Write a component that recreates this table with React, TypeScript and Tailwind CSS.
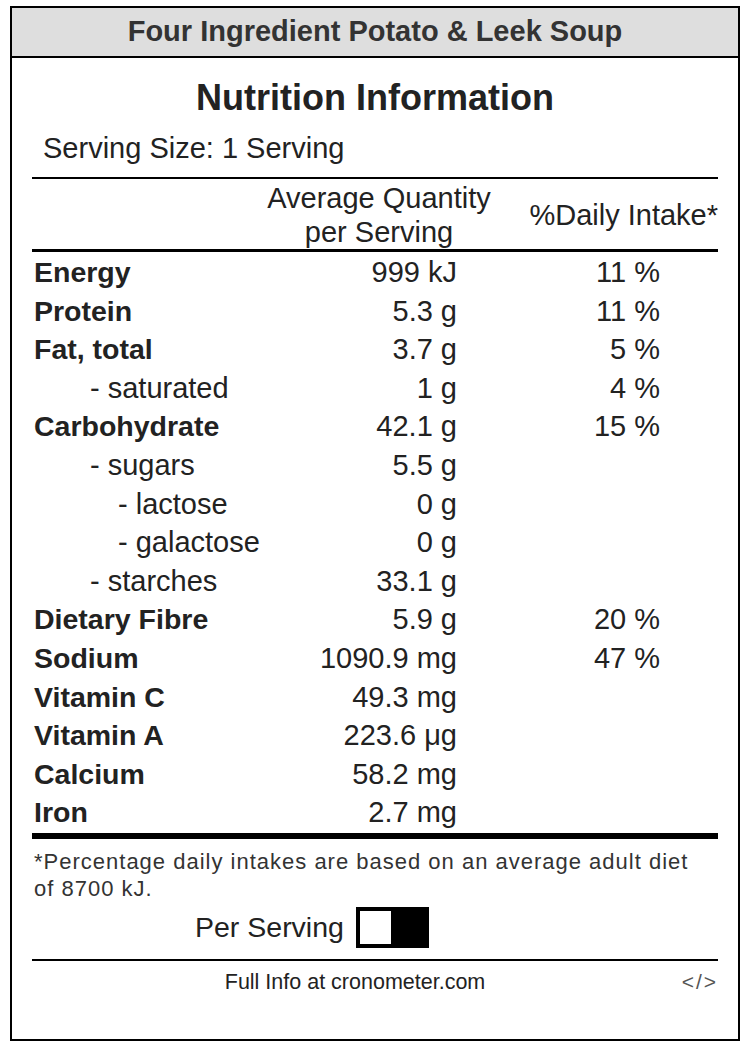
import React from "react";

type Row = {
  label: string;
  qty: string;
  pct?: string;
  level?: 0 | 1 | 2;
};

const ROWS: Row[] = [
  { label: "Energy", qty: "999 kJ", pct: "11 %" },
  { label: "Protein", qty: "5.3 g", pct: "11 %" },
  { label: "Fat, total", qty: "3.7 g", pct: "5 %" },
  { label: "- saturated", qty: "1 g", pct: "4 %", level: 1 },
  { label: "Carbohydrate", qty: "42.1 g", pct: "15 %" },
  { label: "- sugars", qty: "5.5 g", level: 1 },
  { label: "- lactose", qty: "0 g", level: 2 },
  { label: "- galactose", qty: "0 g", level: 2 },
  { label: "- starches", qty: "33.1 g", level: 1 },
  { label: "Dietary Fibre", qty: "5.9 g", pct: "20 %" },
  { label: "Sodium", qty: "1090.9 mg", pct: "47 %" },
  { label: "Vitamin C", qty: "49.3 mg" },
  { label: "Vitamin A", qty: "223.6 μg" },
  { label: "Calcium", qty: "58.2 mg" },
  { label: "Iron", qty: "2.7 mg" },
];

function NutrientRow({ row }: { row: Row }) {
  const level = row.level ?? 0;
  const indent =
    level === 2 ? "pl-[86px] text-[29px]" : level === 1 ? "pl-[58px] text-[29px]" : "pl-[2px] text-[28.5px] font-bold";
  return (
    <div className="grid grid-cols-[268px_157px_203px_1fr] text-[29px] leading-[38.6px]">
      <div className={`${indent} whitespace-nowrap`}>{row.label}</div>
      <div className="text-right whitespace-nowrap">{row.qty}</div>
      <div className="text-right whitespace-nowrap">{row.pct ?? ""}</div>
      <div />
    </div>
  );
}

export default function App() {
  return (
    <div
      className="min-h-screen bg-white pt-[6px] pl-[10px] text-[#222]"
      style={{ fontFamily: '"Liberation Sans", Arial, sans-serif' }}
    >
      <div className="flex h-[1035px] w-[730px] flex-col border-2 border-black">
        <div className="flex h-[50px] items-center justify-center border-b-2 border-black bg-[#dedede] text-[29px] font-bold text-[#333]">
          Four Ingredient Potato &amp; Leek Soup
        </div>

        <div className="flex flex-col px-[20px]">
          <div className="mt-[18px] text-center text-[36px] font-bold leading-[44px]">
            Nutrition Information
          </div>
          <div className="mt-[11px] pl-[11px] text-[29px] leading-[34px]">
            Serving Size: 1 Serving
          </div>

          <div className="mt-[12px] h-[2px] bg-black" />

          <div className="flex items-center pt-[2px] text-[29px] leading-[34px]">
            <div className="w-[226px]" />
            <div className="w-[242px] text-center">
              Average Quantity
              <br />
              per Serving
            </div>
            <div className="flex-1 text-right whitespace-nowrap">%Daily Intake*</div>
          </div>

          <div className="h-[3px] bg-black" />

          <div className="pt-[1px]">
            {ROWS.map((r) => (
              <NutrientRow key={r.label} row={r} />
            ))}
          </div>

          <div className="mt-[1px] h-[6px] bg-black" />

          <div className="mt-[9px] pl-[2px] text-[22px] leading-[27px] tracking-[1px] text-[#333]">
            *Percentage daily intakes are based on an average adult diet
            <br />
            of 8700 kJ.
          </div>

          <div className="mt-[5px] flex items-center gap-[12px] pl-[163px]">
            <span className="text-[28.5px] leading-[34px]">Per Serving</span>
            <div className="flex h-[41px] w-[73px] border-4 border-black bg-black">
              <div className="h-full w-[31px] bg-white" />
            </div>
          </div>

          <div className="mt-[11px] h-[2px] bg-black" />

          <div className="mt-[9px] flex items-center leading-[24px]">
            <div className="flex-1 text-center text-[21.5px]">Full Info at cronometer.com</div>
            <span className="w-[40px] text-right text-[21px] tracking-[2px] text-[#555]">
              &lt;/&gt;
            </span>
          </div>
        </div>
      </div>
    </div>
  );
}
